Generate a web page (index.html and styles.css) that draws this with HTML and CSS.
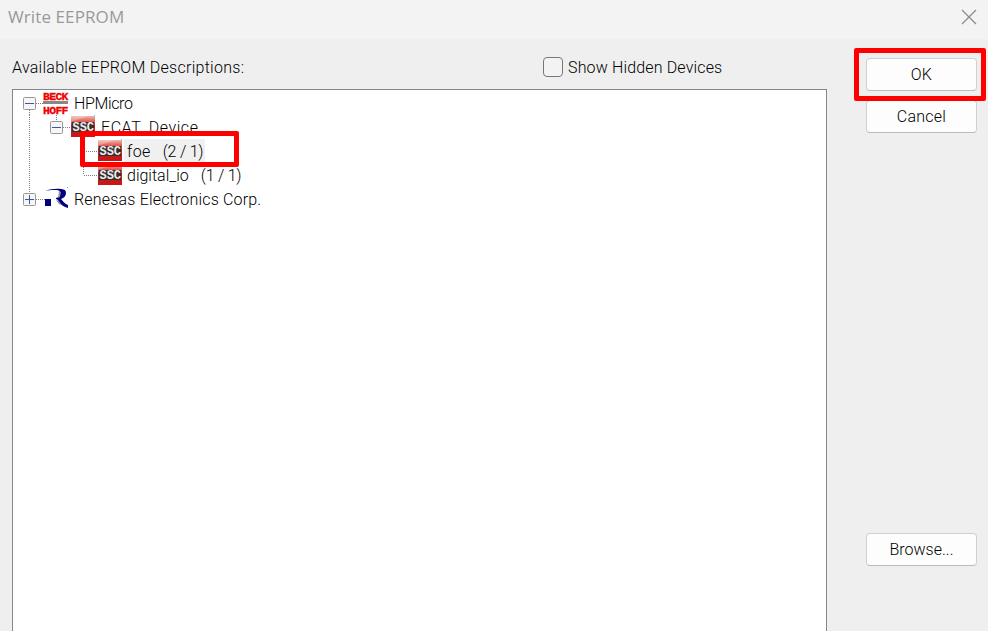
FILE: index.html
```
<!DOCTYPE html>
<html lang="en">
<head>
<meta charset="utf-8">
<title>Write EEPROM</title>
<link rel="stylesheet" href="styles.css">
</head>
<body>
<svg class="defs" width="0" height="0">
  <defs>
    <linearGradient id="chip" x1="0" y1="0" x2="0" y2="1">
      <stop offset="0" stop-color="#f4b4a8"/><stop offset=".25" stop-color="#dc6058"/><stop offset=".45" stop-color="#a92a26"/><stop offset="1" stop-color="#d01414"/>
    </linearGradient>
    <symbol id="ssc" viewBox="0 0 24 24">
      <path fill="url(#chip)" d="M0 1h24v21H0z"/>
      <path fill="#fff" opacity=".25" d="M0 1h17L0 7z"/>
      <path fill="#3a2c2c" d="M1 7h22v10H1z"/>
      <path fill="#00e5e5" d="M23 0h1v1h-1z"/>
      <text class="chip-text" x="1.5" y="16" textLength="21.5" lengthAdjust="spacing">SSC</text>
    </symbol>
    <symbol id="minus" viewBox="0 0 13 13">
      <rect x=".5" y=".5" width="12" height="12" rx="1" fill="#f6f6f6" stroke="#989898"/><path d="M2 6.5h9" stroke="#3c56a0"/>
    </symbol>
    <symbol id="plus" viewBox="0 0 13 13">
      <rect x=".5" y=".5" width="12" height="12" rx="1" fill="#f6f6f6" stroke="#989898"/><path d="M2 6.5h9M6.5 2v9" stroke="#3c56a0"/>
    </symbol>
  </defs>
</svg>
<div class="dialog">
  <header class="titlebar">
    <span class="title">Write EEPROM</span>
    <svg class="close" width="16" height="16" viewBox="0 0 16 16"><path d="M1 1l14 14M15 1L1 15" stroke="#8c8c8c" stroke-width="1.3"/></svg>
  </header>
  <main class="content">
    <section class="left">
      <div class="caption">
        <span class="caption-text">Available EEPROM Descriptions:</span>
        <label class="check"><span class="box"></span><span class="check-text">Show Hidden Devices</span></label>
      </div>
      <div class="tree">
        <div class="row">
          <svg class="guide" width="30" height="24"><path class="dots" d="M16.500 19v5M23 12.500h7"/><use href="#minus" x="10" y="6" width="13" height="13"/></svg>
          <svg class="icon" width="26" height="24" viewBox="0 0 26 24"><text class="beck" x="0" y="9" textLength="25.500" lengthAdjust="spacing">BECK</text><path fill="#888" d="M0 10h25v3H0z"/><text class="beck" x="0" y="22.500" textLength="25.500" lengthAdjust="spacing">HOFF</text></svg>
          <span class="name n1">HPMicro</span>
        </div>
        <div class="row">
          <svg class="guide" width="58" height="24"><path class="dots" d="M16.500 0v24M43.500 0v6M50 12.500h8"/><use href="#minus" x="37" y="6" width="13" height="13"/></svg>
          <svg class="icon" width="24" height="24"><use href="#ssc" width="24" height="24"/></svg>
          <span class="name n2">ECAT_Device</span>
        </div>
        <div class="row">
          <svg class="guide" width="85" height="24"><path class="dots" d="M16.500 0v24M70.500 0v24M71 12.500h14"/></svg>
          <svg class="icon" width="24" height="24"><use href="#ssc" width="24" height="24"/></svg>
          <span class="name n3 selected">foe<span class="rev">(2 / 1)</span></span>
          <span class="mark mark-row"></span>
        </div>
        <div class="row">
          <svg class="guide" width="85" height="24"><path class="dots" d="M16.500 0v24M70.500 0v12M71 12.500h14"/></svg>
          <svg class="icon" width="24" height="24"><use href="#ssc" width="24" height="24"/></svg>
          <span class="name n4">digital_io<span class="rev">(1 / 1)</span></span>
        </div>
        <div class="row">
          <svg class="guide" width="30" height="24"><path class="dots" d="M16.500 0v6M23 12.500h9"/><use href="#plus" x="10" y="6" width="13" height="13"/></svg>
          <svg class="icon" width="26" height="24" viewBox="0 0 26 24"><path fill="#000080" d="M2 12h6v7H2zM2 4C7 2 13 1.500 18 2c4 .3 5 2 5 4 0 3-2 5-5 6 2 2 4 5 7 6v3c-4-1-7-3-9-6-1-2-2-3-3-3v-1c2-.5 4-2 4-5s-2-3-5-3c-3-.2-6 .2-10 1z"/><path fill="#8a8fa8" d="M16 4l2 1-1 5-2 1zM13 13l3 1 2 4-2-1z"/><path fill="#00e5e5" d="M24 0h1v1h-1z"/></svg>
          <span class="name n5">Renesas Electronics Corp.</span>
        </div>
      </div>
    </section>
    <aside class="actions">
      <div class="button ok">OK<span class="mark mark-ok"></span></div>
      <div class="button cancel">Cancel</div>
      <div class="button browse">Browse...</div>
    </aside>
  </main>
</div>
</body>
</html>
```
FILE: styles.css
```
* { box-sizing: border-box; }
body { margin: 0; overflow: hidden; }
.defs { position: absolute; }
.dialog { width: 988px; height: 631px; display: flex; flex-direction: column; background: #efefef; color: #000; font: 300 16px/24px Roboto, "Liberation Sans", sans-serif; white-space: nowrap; }
.titlebar { height: 39px; flex: none; display: flex; justify-content: space-between; padding: 5px 11px 0 8px; background: #f3f3f3; }
.title { color: #999; font: 400 17px/24px "Open Sans", "Noto Sans", sans-serif; letter-spacing: 0.1px; }
.close { margin-top: 4px; }
.content { flex: 1; min-height: 0; display: flex; padding: 0 11px 0 12px; justify-content: space-between; }
.left { width: 815px; display: flex; flex-direction: column; }
.caption { height: 50px; flex: none; display: flex; padding-top: 17px; }
.caption-text { width: 531px; letter-spacing: 0.28px; }
.check { display: flex; gap: 5px; letter-spacing: 0.15px; }
.box { width: 20px; height: 20px; margin-top: 1px; border: 1px solid #777; border-radius: 4px; background: #f3f3f3; }
.tree { flex: 1; border: 1px solid #828790; border-bottom: 0; padding-top: 1px; background: #fff; }
.row { height: 24px; display: flex; position: relative; }
.guide, .icon { flex: none; overflow: visible; }
.dots { stroke: #808080; stroke-dasharray: 1 1; fill: none; }
.name { margin-left: 5px; line-height: 26px; height: 24px; }
.n1 { letter-spacing: -0.35px; }
.n2 { margin-left: 6px; letter-spacing: 0.55px; }
.n3 { letter-spacing: 0.4px; }
.n4 { letter-spacing: 0; }
.n5 { letter-spacing: 0.18px; }
.rev { margin-left: 12px; letter-spacing: -0.25px; }
.selected { background: #f0f0f0; box-shadow: -3px 0 #f0f0f0; padding-right: 2px; }
.beck { font: 700 11.500px "Liberation Mono", monospace; fill: #f00000; stroke: #f00000; stroke-width: .3px; }
.chip-text { font: 700 12px "Liberation Mono", monospace; fill: #eee; }
.actions { width: 111px; display: flex; flex-direction: column; padding-top: 19px; }
.button { position: relative; height: 33px; flex: none; border: 1px solid #d0d0d0; border-bottom-color: #bbb; border-radius: 4px; background: #fdfdfd; text-align: center; line-height: 31px; letter-spacing: 0.25px; }
.cancel { margin-top: 9px; }
.browse { margin-top: 400px; letter-spacing: 0; }
.mark { position: absolute; border: 5px solid #f00; border-radius: 2px; z-index: 2; }
.mark-row { left: 67px; top: -8px; width: 159px; height: 36px; }
.mark-ok { left: -13px; top: -11px; width: 132px; height: 53px; }
```
